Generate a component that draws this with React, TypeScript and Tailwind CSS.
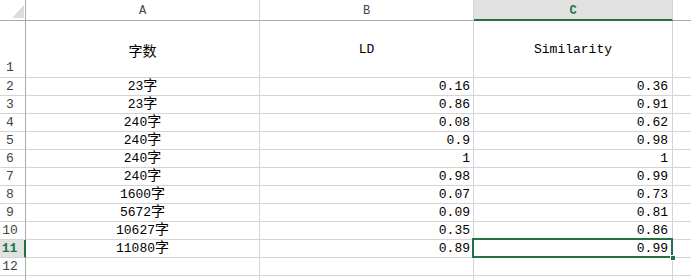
import React from "react";

const rows: [string, string, string][] = [
  ["23", "0.16", "0.36"],
  ["23", "0.86", "0.91"],
  ["240", "0.08", "0.62"],
  ["240", "0.9", "0.98"],
  ["240", "1", "1"],
  ["240", "0.98", "0.99"],
  ["1600", "0.07", "0.73"],
  ["5672", "0.09", "0.81"],
  ["10627", "0.35", "0.86"],
  ["11080", "0.89", "0.99"],
];

const mono = { fontFamily: '"Liberation Mono", "Noto Sans CJK SC", monospace' };
const cjk = { fontFamily: '"Noto Sans CJK SC", sans-serif' };

function Zi({ n }: { n: string }) {
  return (
    <span className="block text-[13px] leading-[16px] whitespace-nowrap" style={mono}>
      {n}
      <span className="text-[14px] leading-[0]" style={cjk}>字</span>
    </span>
  );
}

export default function App() {
  return (
    <div className="w-[691px] h-[280px] overflow-hidden bg-white text-black">
      <div className="grid grid-cols-[26px_234px_214px_199px_1fr]">
        {/* header row */}
        <div className="h-[21px] border-r border-b border-r-[#ababab] border-b-[#ababab] relative">
          <svg className="absolute left-[12px] top-[5px]" width="12" height="13" viewBox="0 0 12 13">
            <polygon points="12,0 12,13 0,13" fill="#dcdcdc" />
          </svg>
        </div>
        <div className="h-[21px] border-r border-b border-r-[#d4d4d4] border-b-[#ababab] flex items-end justify-center pb-[2px] text-[12px] leading-[14px] text-[#444]" style={mono}>A</div>
        <div className="h-[21px] border-r border-b border-r-[#d4d4d4] border-b-[#ababab] flex items-end justify-center pb-[2px] text-[12px] leading-[14px] text-[#444]" style={mono}>B</div>
        <div className="h-[21px] border-r border-r-[#d4d4d4] border-b-2 border-b-[#217346] bg-[#e1e1e1] flex items-end justify-center pb-[1px] text-[12px] leading-[14px] font-bold text-[#217346]" style={mono}>C</div>
        <div className="h-[21px] border-b border-b-[#ababab]"></div>

        {/* row 1 */}
        <div className="h-[57px] border-r border-b border-r-[#ababab] border-b-[#d4d4d4] flex items-end justify-center pr-[5px] pb-[1px] text-[13px] leading-[16px] text-[#444]" style={mono}>1</div>
        <div className="h-[57px] border-r border-b border-[#d4d4d4] flex items-center justify-center text-[14px] leading-[16px] pt-[1px]" style={cjk}>字数</div>
        <div className="h-[57px] border-r border-b border-[#d4d4d4] flex items-center justify-center text-[13px] leading-[16px] pt-[1px]" style={mono}>LD</div>
        <div className="h-[57px] border-r border-b border-[#d4d4d4] flex items-center justify-center text-[13px] leading-[16px] pt-[1px]" style={mono}>Similarity</div>
        <div className="h-[57px] border-b border-[#d4d4d4]"></div>

        {rows.map((r, i) => {
          const n = i + 2;
          const sel = n === 11;
          return (
            <React.Fragment key={n}>
              <div
                className={
                  sel
                    ? "h-[18px] border-r-2 border-r-[#217346] border-b border-b-[#d4d4d4] bg-[#e1e1e1] flex items-end justify-center pr-[5px] text-[13px] leading-[16px] font-bold text-[#217346]"
                    : "h-[18px] border-r border-b border-r-[#ababab] border-b-[#d4d4d4] flex items-end justify-center pr-[5px] text-[13px] leading-[16px] text-[#444]"
                }
                style={mono}
              >
                {n}
              </div>
              <div className="h-[18px] border-r border-b border-[#d4d4d4] flex items-end justify-center">
                <Zi n={r[0]} />
              </div>
              <div className="h-[18px] border-r border-b border-[#d4d4d4] flex items-end justify-end pr-[3px] text-[13px] leading-[16px]" style={mono}>
                {r[1]}
              </div>
              <div className="relative h-[18px] border-r border-b border-[#d4d4d4] flex items-end justify-end pr-[4px] text-[13px] leading-[16px]" style={mono}>
                {r[2]}
                {sel && (
                  <>
                    <div className="absolute left-[-2px] top-[-2px] right-[-1px] bottom-[-1px] border-2 border-[#217346]"></div>
                    <div className="absolute right-[-4px] bottom-[-4px] w-[6px] h-[6px] bg-[#217346] border border-white"></div>
                  </>
                )}
              </div>
              <div className="h-[18px] border-b border-[#d4d4d4]"></div>
            </React.Fragment>
          );
        })}

        {/* row 12 */}
        <div className="h-[18px] border-r border-b border-r-[#ababab] border-b-[#d4d4d4] flex items-end justify-center pr-[5px] text-[13px] leading-[16px] text-[#444]" style={mono}>12</div>
        <div className="h-[18px] border-r border-b border-[#d4d4d4]"></div>
        <div className="h-[18px] border-r border-b border-[#d4d4d4]"></div>
        <div className="h-[18px] border-r border-b border-[#d4d4d4]"></div>
        <div className="h-[18px] border-b border-[#d4d4d4]"></div>

        {/* row 13 partial */}
        <div className="h-[18px] border-r border-r-[#ababab]"></div>
        <div className="h-[18px] border-r border-[#d4d4d4]"></div>
        <div className="h-[18px] border-r border-[#d4d4d4]"></div>
        <div className="h-[18px] border-r border-[#d4d4d4]"></div>
        <div className="h-[18px]"></div>
      </div>
    </div>
  );
}
